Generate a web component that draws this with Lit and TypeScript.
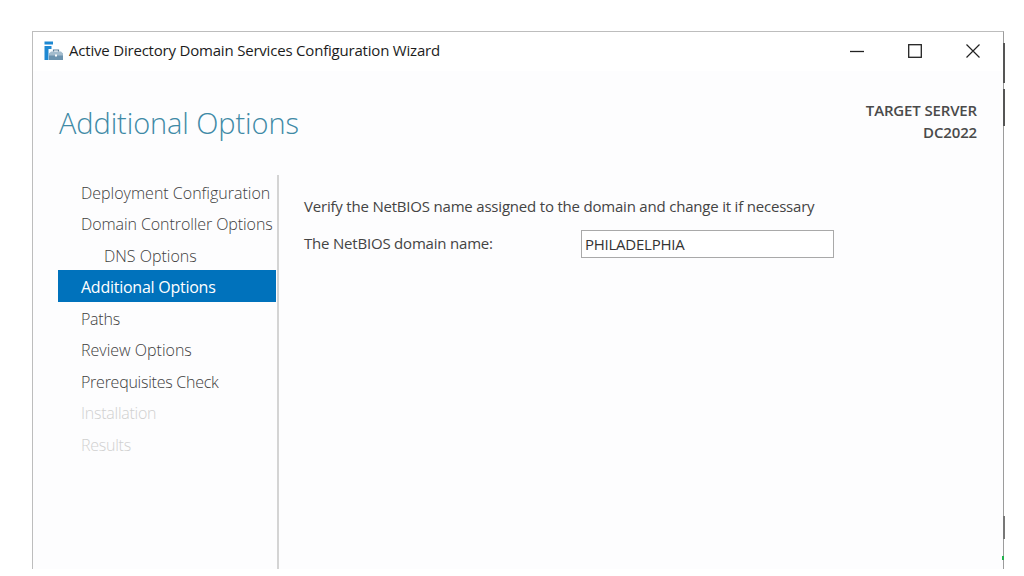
import { LitElement, html, css } from "lit";
import { customElement } from "lit/decorators.js";

const steps = [
  { t: "Deployment Configuration" },
  { t: "Domain Controller Options", snug: true },
  { t: "DNS Options", sub: true },
  { t: "Additional Options", active: true, tight: true },
  { t: "Paths", tight: true },
  { t: "Review Options" },
  { t: "Prerequisites Check", tight: true },
  { t: "Installation", off: true, tight: true },
  { t: "Results", off: true, tight: true },
];

@customElement("app-root")
export class AppRoot extends LitElement {
  static styles = css`
    :host { display: block; width: 1024px; height: 576px; background: #fff; overflow: hidden;
      font-family: "Open Sans", "Noto Sans", sans-serif; color: #3f3f3f; }
    .page { height: 576px; box-sizing: border-box; padding: 31px 20px 7px 32px; display: flex; }
    .win { flex: 1; display: flex; flex-direction: column; background: #fdfdfe;
      border-top: 1px solid #bdbdbd; border-left: 1px solid #bdbdbd; border-right: 1px solid #9c9c9c; position: relative; }
    .titlebar { height: 39px; flex: none; background: #fff; display: flex; align-items: center; padding: 0 1px 2px 11px; box-sizing: border-box; }
    .titlebar svg.logo { flex: none; }
    .wtitle { margin: 0 0 2px 5px; font-size: 15px; color: #1c1c1c; letter-spacing: -0.2px; white-space: nowrap; }
    .ctrls { margin-left: auto; display: flex; }
    .ctrl { width: 58px; height: 37px; display: flex; align-items: center; justify-content: center; }
    .head { height: 104px; flex: none; display: flex; justify-content: space-between; padding: 0 26px 0 26px; box-sizing: border-box; }
    h1 { margin: 32px 0 0; font-size: 29px; font-weight: 300; line-height: 40px; color: #3f8aa6; letter-spacing: -0.1px; }
    .server { margin-top: 29px; text-align: right; font-size: 15px; font-weight: 600; line-height: 21.5px; color: #4a4a4a; letter-spacing: -0.15px; }
    .body { flex: 1; display: flex; min-height: 0; }
    .nav { width: 246px; flex: none; box-sizing: border-box; padding: 0.5px 0 0 25px; border-right: 2px solid #d4d4d4; }
    .step { height: 31.5px; box-sizing: border-box; padding: 3px 0 0 23px; display: flex; align-items: center; font-size: 16px; font-weight: 300;
      color: #404040; white-space: nowrap; letter-spacing: 0; }
    .step.sub { padding-left: 46px; }
    .step.snug { letter-spacing: -0.08px; }
    .step.tight { letter-spacing: -0.25px; }
    .step.active { background: #0072bc; color: #fff; font-weight: 400; margin-right: 1px; }
    .step.off { color: #d0d0d0; }
    .main { padding: 19px 0 0 25px; flex: 1; font-size: 15px; color: #444; letter-spacing: -0.2px; }
    .verify { line-height: 24px; white-space: nowrap; }
    .row { display: flex; align-items: center; margin-top: 12px; }
    .row label { width: 277px; flex: none; margin-bottom: 2px; }
    .field { width: 253px; height: 28px; box-sizing: border-box; border: 1px solid #a9a9a9; background: #fff;
      padding-left: 3px; display: flex; align-items: center; color: #333; font-size: 15px; letter-spacing: -0.25px; }
    .edge { position: absolute; right: -2px; width: 2px; background: #555; }
    .e1 { top: 11px; height: 40px; }
    .e2 { top: 57px; height: 37px; }
    .e3 { top: 484px; height: 23px; background: #777; }
    .e4 { top: 524px; height: 4px; right: -1px; background: #22b14c; }
  `;

  render() {
    return html`<div class="page"><div class="win">
      <div class="titlebar">
        <svg class="logo" width="20" height="20" viewBox="0 0 20 20">
          <rect x="0.5" y="0.5" width="8.5" height="3" fill="#1e88d2"/>
          <path d="M0.5 5h7v3H4.5v11H0.5z" fill="#1e88d2"/>
          <path d="M5 12.5 h14 V19 H5z" fill="#6c93ae"/>
          <path d="M5 12.5 L7 10.5 h10 l2 2 v2 H5z" fill="#a3bccd"/>
          <path d="M9.5 10.5 v-1.5 h5 v1.5" fill="none" stroke="#5b7f98" stroke-width="1.2"/>
          <rect x="11" y="13.5" width="2" height="2" fill="#fff"/>
        </svg>
        <span class="wtitle">Active Directory Domain Services Configuration Wizard</span>
        <div class="ctrls">
          <div class="ctrl"><svg width="14" height="14" viewBox="0 0 14 14"><path d="M0 7.5h14" stroke="#222" stroke-width="1.3"/></svg></div>
          <div class="ctrl"><svg width="14" height="14" viewBox="0 0 14 14"><rect x=".7" y=".7" width="12.6" height="12.6" fill="none" stroke="#222" stroke-width="1.3"/></svg></div>
          <div class="ctrl"><svg width="14" height="14" viewBox="0 0 14 14"><path d="M.5.5l13 13M13.5.5l-13 13" stroke="#222" stroke-width="1.2"/></svg></div>
        </div>
      </div>
      <div class="head">
        <h1>Additional Options</h1>
        <div class="server">TARGET SERVER<br />DC2022</div>
      </div>
      <div class="body">
        <div class="nav">
          ${steps.map(s => html`<div class="step ${s.sub ? "sub" : ""} ${s.snug ? "snug" : ""} ${s.tight ? "tight" : ""} ${s.active ? "active" : ""} ${s.off ? "off" : ""}">${s.t}</div>`)}
        </div>
        <div class="main">
          <div class="verify">Verify the NetBIOS name assigned to the domain and change it if necessary</div>
          <div class="row"><label>The NetBIOS domain name:</label><div class="field">PHILADELPHIA</div></div>
        </div>
      </div>
      <div class="edge e1"></div><div class="edge e2"></div><div class="edge e3"></div><div class="edge e4"></div>
    </div></div>`;
  }
}
